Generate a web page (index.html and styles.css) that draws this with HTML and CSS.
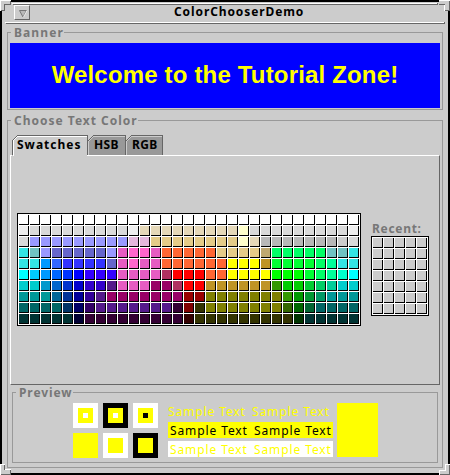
FILE: index.html
```html
<!DOCTYPE html>
<html lang="en">
<head>
<meta charset="utf-8">
<title>ColorChooserDemo</title>
<link rel="stylesheet" href="styles.css">
</head>
<body>
<div class="window">
  <svg class="frame" width="450" height="475" viewBox="0 0 450 475" shape-rendering="crispEdges">
    <path fill="#fff" d="M12 3H438V4H12zM5 22H445V23H5z"/>
    <path fill="#666" d="M13 4H438V5H13zM437 3H438V5H437zM6 23H445V24H6zM444 22H445V24H444z"/>
    <path fill="#ccc" d="M0 0H11V5H5V11H0zM439 0H450V11H445V5H439zM0 464H5V470H11V475H0zM445 464H450V475H439V470H445z"/>
    <path fill="#fff" d="M0 0H11V1H1V11H0zM439 0H450V1H439zM444 5H445V11H444zM0 464H5V465H1V475H0zM5 469H11V470H5zM445 464H450V465H446V471H440V475H439V470H445z"/>
    <path fill="#666" d="M10 1H11V5H5V11H1V10H4V4H10zM439 4H445V5H439zM449 1H450V11H445V10H449zM4 465H5V470H4zM10 470H11V475H1V474H10zM449 465H450V475H440V474H449z"/>
  </svg>
  <header class="titlebar">
    <div class="menu-button">
      <svg width="9" height="8" viewBox="0 0 9 8"><path d="M.5 .5H7.5L4 7z" fill="#bbb" stroke="#777" stroke-width="1"/><path d="M4.5 7L8 .5" stroke="#fff" stroke-width=".8"/></svg>
    </div>
    <h1 class="title">ColorChooserDemo</h1>
  </header>

  <section class="group group-banner">
    <h2 class="legend legend-banner">Banner</h2>
    <div class="banner">Welcome to the Tutorial Zone!</div>
  </section>

  <section class="group group-chooser">
    <h2 class="legend legend-chooser">Choose Text Color</h2>
    <nav class="tabs">
      <div class="tab tab-active">
        <svg class="tab-shape" width="77" height="21" shape-rendering="crispEdges"><path fill="#ccc" d="M0 5L5 0H76V21H0z"/><path fill="#666" d="M5 0H76V20H75V1H5zM0 5H1V20H0zM1 4H2V5H1zM2 3H3V4H2zM3 2H4V3H3zM4 1H5V2H4z"/><path fill="#fff" d="M5 1H75V2H5zM1 5H2V21H1zM2 4H3V5H2zM3 3H4V4H3zM4 2H5V3H4zM75 20H77V21H75z"/></svg>
        <span class="tab-label label-swatches">Swatches</span>
      </div>
      <div class="tab tab-hsb">
        <svg class="tab-shape" width="38" height="20" shape-rendering="crispEdges"><path fill="#999" d="M0 5L5 0H38V20H0z"/><path fill="#666" d="M5 0H38V20H37V1H5zM0 5H1V4H2V3H3V2H4V1H5V2H4V3H3V4H2V5H1V6H0z"/><path fill="#ccc" d="M5 1H37V2H5zM0 6H1V5H2V4H3V3H4V2H5V3H4V4H3V5H2V6H1V20H0z"/></svg>
        <span class="tab-label label-hsb">HSB</span>
      </div>
      <div class="tab tab-rgb">
        <svg class="tab-shape" width="37" height="20" shape-rendering="crispEdges"><path fill="#999" d="M0 5L5 0H37V20H0z"/><path fill="#666" d="M5 0H37V20H36V1H5zM0 5H1V4H2V3H3V2H4V1H5V2H4V3H3V4H2V5H1V6H0z"/><path fill="#ccc" d="M5 1H36V2H5zM0 6H1V5H2V4H3V3H4V2H5V3H4V4H3V5H2V6H1V20H0z"/></svg>
        <span class="tab-label label-rgb">RGB</span>
      </div>
    </nav>
    <div class="tab-panel">
      <div class="swatches" id="swatches"></div>
      <div class="recent">
        <div class="recent-label">Recent:</div>
        <div class="swatches recent-grid" id="recent"></div>
      </div>
    </div>
    <section class="preview">
      <h2 class="legend legend-preview">Preview</h2>
      <div class="squares">
        <div class="square white"><div class="inner"><div class="core white"></div></div></div>
        <div class="square black"><div class="inner"><div class="core white"></div></div></div>
        <div class="square white"><div class="inner"><div class="core black"></div></div></div>
        <div class="square yellow"></div>
        <div class="square white"><div class="inner"></div></div>
        <div class="square black"><div class="inner"></div></div>
      </div>
      <div class="samples">
        <div class="sample sample-plain"><span>Sample Text</span><span>Sample Text</span></div>
        <div class="sample sample-yellow"><span>Sample Text</span><span>Sample Text</span></div>
        <div class="sample sample-white"><span>Sample Text</span><span>Sample Text</span></div>
      </div>
      <div class="current"></div>
    </section>
  </section>
</div>
<script src="swatches.js"></script>
</body>
</html>
```
FILE: styles.css
```css
* { box-sizing: border-box; }
body { margin: 0; overflow: hidden; }
h1, h2 { margin: 0; font-size: inherit; }

.window {
  position: relative;
  width: 450px;
  height: 475px;
  border: 2px solid #000;
  background: #ccc;
  font: bold 12px/16px "Noto Sans", "Open Sans", sans-serif;
  color: #000;
  white-space: nowrap;
}
.frame { position: absolute; left: -2px; top: -2px; pointer-events: none; }

.titlebar { display: flex; height: 30px; padding: 3px 0 0 12px; }
.menu-button {
  width: 16px;
  height: 15px;
  padding: 4px 0 0 4px;
  line-height: 0;
  border: 1px solid;
  border-color: #fff #666 #666 #fff;
}
.title { margin-left: 144px; margin-top: -1px; letter-spacing: 0.9px; }

.group { position: relative; margin-left: 5px; width: 436px; border: 1px solid #999; }
.group-banner { height: 78px; padding: 10px 2px 0; }
.group-chooser { height: 348px; margin-top: 10px; padding: 14px 2px 0; }
.legend { position: absolute; left: 3px; top: -7px; padding: 0 3px; line-height: 14px; background: #ccc; color: #777; }
.legend-banner { width: 53px; letter-spacing: 1.1px; }
.legend-chooser { width: 127px; letter-spacing: 1px; }
.legend-preview { width: 57px; letter-spacing: 0.9px; }

.banner {
  height: 65px;
  background: #00f;
  color: #ff0;
  font: bold 24px/64px "Liberation Sans", Arial, sans-serif;
  letter-spacing: 0.17px;
  text-align: center;
}

.tabs { display: flex; position: relative; z-index: 1; height: 20px; padding-left: 2px; }
.tab { position: relative; height: 20px; }
.tab-active { width: 76px; }
.tab-hsb { width: 38px; }
.tab-rgb { width: 37px; }
.tab-shape { position: absolute; left: 0; top: 0; }
.tab-label { position: relative; display: block; padding: 2px 0 0 6px; letter-spacing: 0.4px; }
.label-swatches { padding-left: 5px; letter-spacing: 1px; }

.tab-panel {
  display: flex;
  gap: 10px;
  height: 230px;
  padding: 57px 0 0 6px;
  border: 1px solid;
  border-color: #fff #666 #666 #fff;
}
.swatches {
  display: grid;
  grid-template-columns: repeat(31, 10px);
  grid-auto-rows: 10px;
  gap: 1px;
  width: 344px;
  height: 113px;
  padding: 1px;
  border: 1px solid #000;
  background: #fff;
}
.swatch { border: solid #000; border-width: 0 1px 1px 0; }
.recent { padding-top: 7px; }
.recent-label { height: 16px; padding: 1px 0 0 1px; color: #777; letter-spacing: 0.7px; }
.recent-grid { grid-template-columns: repeat(5, 10px); width: 58px; height: 80px; }

.preview {
  position: relative;
  display: flex;
  width: 426px;
  height: 71px;
  margin: 7px 0 0 2px;
  padding: 10px 0 0 60px;
  border: 1px solid #999;
}
.squares { display: grid; grid-template-columns: repeat(3, 25px); grid-auto-rows: 25px; gap: 5px; }
.square { padding: 5px; }
.inner { width: 15px; height: 15px; padding: 5px; background: #ff0; }
.core { width: 5px; height: 5px; }
.white { background: #fff; }
.black { background: #000; }
.yellow { background: #ff0; }
.samples { display: flex; flex-direction: column; gap: 3px; width: 165px; margin-left: 10px; }
.sample { display: flex; gap: 7px; height: 16px; padding: 1px 0 0 2px; font-weight: 400; }
.sample span { width: 77px; letter-spacing: 0.9px; }
.sample-plain { padding-left: 0; color: #ff0; }
.sample-yellow { background: #ff0; }
.sample-white { background: #fff; color: #ff0; }
.current { width: 41px; height: 54px; margin-left: 4px; background: #ff0; }
```
FILE: swatches.js
```js
// Palette rows as "count*color" runs, 31 swatches per row.
const rows = [
  '31*fff',
  '1*eee 9*d9d9d9 1*eee 9*e5d8b8 1*ffffcc 9*d9d9d9 1*eee',
  '1*d9d9d9 9*9999ff 2*e4b8dc 8*e4cb88 1*ffffcc 1*e5d8b8 7*b8b8b8 1*ccc 1*d9d9d9',
  '1*33e6e6 1*70c2c2 1*9999ff 5*6666cc 1*9999ff 1*e65cc2 2*ff66cc 1*e65cc2 5*ff6633 4*e4cb88 1*bfa870 5*00ff66 2*70c2c2 1*33e6e6',
  '2*33e6e6 1*0099ff 1*3366ff 4*3333ff 1*6666cc 1*e65cc2 1*ff66cc 2*e65cc2 6*ff6633 3*ffff00 1*bf9426 4*00ff33 1*00ff66 1*00ff99 2*33e6e6',
  '1*00ffff 1*00ccff 1*0099ff 1*0066ff 1*0033ff 1*0000ff 3*3300ff 4*e65cc2 1*b03060 3*ff0000 2*ff6633 4*ffff00 3*00ff00 1*00ff33 1*00ff66 1*00ff99 1*00ffcc 1*00ffff',
  '2*00cccc 1*0099cc 1*0066cc 1*0033cc 1*0000cc 2*3300cc 1*551a8b 3*e65cc2 2*990066 1*b03060 2*ff0000 6*bf9426 1*339900 2*00cc00 1*00cc33 1*00cc66 1*00cc99 2*00cccc',
  '3*009999 1*006699 1*003399 1*000099 1*330099 1*551a8b 7*990066 2*990000 7*808000 1*339900 1*009900 1*009933 1*009966 3*009999',
  '4*006666 1*003366 1*000066 1*330066 7*551a8b 1*330033 1*800000 1*333300 7*808000 1*336600 1*006600 1*006633 4*006666',
  '5*003333 1*000033 9*330033 1*330000 9*333300 1*003300 5*003333'
];

function addSwatch(parent, color) {
  const cell = document.createElement('div');
  cell.className = 'swatch';
  cell.style.background = color;
  parent.appendChild(cell);
}

const main = document.getElementById('swatches');
for (const row of rows) {
  for (const run of row.split(' ')) {
    const [count, color] = run.split('*');
    for (let i = 0; i < Number(count); i++) addSwatch(main, '#' + color);
  }
}

const recent = document.getElementById('recent');
for (let i = 0; i < 35; i++) addSwatch(recent, '#ccc');
```
